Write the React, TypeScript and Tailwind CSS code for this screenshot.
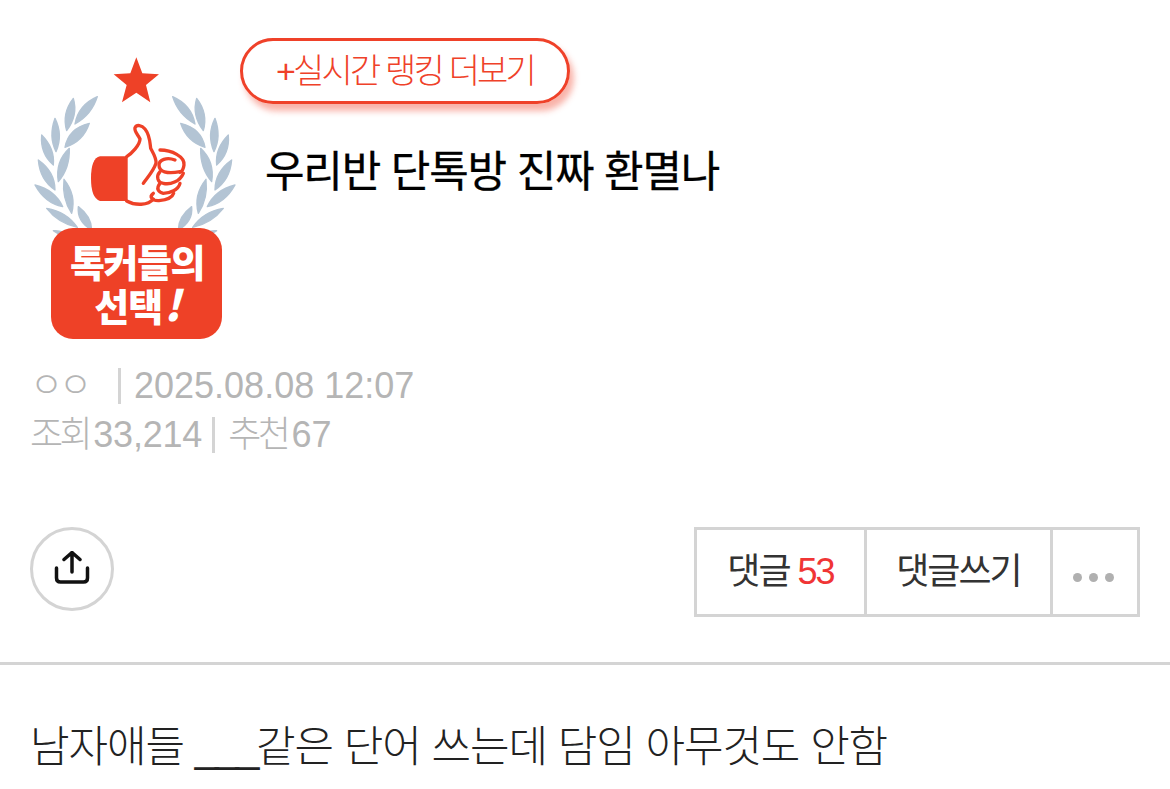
const sans = "font-['Liberation_Sans','Noto_Sans_CJK_KR',sans-serif]";

// left half of the wreath, in 3x crop coordinates
const leaves = [
  "M232 170 Q175 195 165 252 Q215 225 232 170Z",
  "M160 175 Q125 220 140 272 Q175 225 160 175Z",
  "M208 250 Q145 265 135 322 Q190 305 208 250Z",
  "M105 235 Q85 290 108 335 Q130 285 105 235Z",
  "M148 325 Q105 365 115 425 Q150 385 148 325Z",
  "M65 285 Q60 340 100 375 Q105 325 65 285Z",
  "M55 360 Q60 420 105 450 Q105 395 55 360Z",
  "M132 418 Q125 475 155 520 Q170 465 132 418Z",
  "M45 435 Q75 490 128 500 Q105 450 45 435Z",
  "M80 505 Q115 550 172 562 Q140 515 80 505Z",
  "M175 500 Q170 545 215 570 Q215 530 175 500Z",
  "M100 572 Q125 590 150 590 Q130 570 100 572Z",
];

function Badge() {
  return (
    <svg viewBox="30 50 210 295" className="w-[210px] h-[295px] shrink-0 mt-[12px]">
      <g transform="translate(20 40) scale(0.3333)">
        <g fill="#b3c4d4" stroke="#b3c4d4" strokeWidth="4" strokeLinejoin="round">
          {leaves.map((d) => <path key={d} d={d} />)}
        </g>
        <g fill="#b3c4d4" stroke="#b3c4d4" strokeWidth="4" strokeLinejoin="round" transform="translate(690 0) scale(-1 1)">
          {leaves.map((d) => <path key={d} d={d} />)}
        </g>
        <path fill="#ee4127" d="M349 52 L367 100 L417 103 L378 135 L391 187 L349 158 L306 187 L320 135 L281 103 L331 100Z" />
      </g>
      <g transform="translate(85 115) scale(0.3333)" fill="none" stroke="#ee4127" strokeWidth="10" strokeLinecap="round">
        <path fill="#ee4127" stroke="none" d="M128 124 L45 124 Q18 130 18 190 Q18 250 45 258 L128 258Z" />
        <path d="M125 125 C140 115 165 90 165 72 C160 60 147 50 150 38 C155 28 170 30 180 42 C195 60 195 85 197 100 C205 115 215 130 213 145 C205 170 185 190 175 205" />
        <path d="M225 105 C260 105 300 125 297 150 C295 165 290 170 285 172" />
        <path d="M270 135 C245 125 222 135 222 150 C222 170 245 178 285 170" />
        <path d="M225 170 C212 185 218 203 235 205 C255 210 285 200 295 175" />
        <path d="M225 205 C212 220 220 232 235 235 C255 235 280 225 285 205" />
        <path d="M205 235 C192 245 200 258 222 257 C245 255 262 248 266 235" />
        <path d="M125 258 C150 272 190 272 205 252" />
      </g>
      <rect x="51" y="228" width="171" height="111" rx="22" fill="#ee4127" />
      <text x="137" y="277" textAnchor="middle" fill="#fff" fontSize="38" fontWeight="900" letterSpacing="-1.5" fontFamily="'Noto Sans CJK KR',sans-serif">톡커들의</text>
      <text x="137" y="321" textAnchor="middle" fill="#fff" fontSize="38" fontWeight="900" letterSpacing="-1" fontFamily="'Noto Sans CJK KR',sans-serif">선택<tspan fontStyle="italic" fontSize="42" dx="2">!</tspan></text>
    </svg>
  );
}

export default function App() {
  return (
    <div className={`${sans} w-[1170px] h-[789px] overflow-hidden bg-white`}>
      <section className="flex pl-[30px] pt-[38px]">
        <Badge />
        <div className="flex flex-col items-start">
          <a className="w-[330px] h-[66px] flex items-center justify-center rounded-full border-[3px] border-[#ef4129] text-[#ef4129] text-[34px] tracking-[-2.8px] font-light shadow-[4px_7px_6px_rgba(239,65,41,0.4)]">
            +실시간 랭킹 더보기
          </a>
          <h1 className="ml-[25px] mt-[40px] text-[43px] leading-[56px] font-normal text-black tracking-[-1.2px] [-webkit-text-stroke:0.3px_#000]">
            우리반 단톡방 진짜 환멸나
          </h1>
        </div>
      </section>

      <div className="pl-[30px] mt-[17px] text-[#b5b5b5] text-[36px] leading-[48px]">
        <div className="flex items-center">
          <span className="w-[88px] tracking-[-4px] font-light">ㅇㅇ</span>
          <span className="w-[3px] h-[36px] bg-[#d4d4d4] mr-[13px]" />
          <span>2025.08.08 12:07</span>
        </div>
        <div className="flex items-center translate-y-[1px]">
          <span className="font-light tracking-[-3.5px] mr-[4px]">조회</span>
          <span className="tracking-[-0.2px]">33,214</span>
          <span className="w-[3px] h-[36px] bg-[#d4d4d4] ml-[10px] mr-[13px]" />
          <span className="font-light tracking-[-3.5px] mr-[4px]">추천</span>
          <span>67</span>
        </div>
      </div>

      <div className="flex items-start justify-between px-[30px] mt-[69px]">
        <button className="w-[84px] h-[84px] rounded-full border-[3px] border-[#d4d4d4] flex items-center justify-center">
          <svg viewBox="0 0 36 36" className="w-[36px] h-[36px]" fill="none" stroke="#111" strokeWidth="3.5" strokeLinecap="round" strokeLinejoin="round">
            <path d="M18 21 V1.5 M10 8.5 L18 1.5 L26 8.5" />
            <path d="M2.5 17 V27 Q2.5 31 6.5 31 H29.5 Q33.5 31 33.5 27 V17" />
          </svg>
        </button>
        <div className="flex w-[446px] h-[90px] border-[3px] border-[#d4d4d4] text-[#333] text-[36px] tracking-[-2px] font-normal">
          <button className="w-[170px] flex items-center justify-center border-r-[3px] border-[#d4d4d4]">
            댓글&nbsp;<span className="text-[#f03535]">53</span>
          </button>
          <button className="w-[186px] flex items-center justify-center border-r-[3px] border-[#d4d4d4]">
            댓글쓰기
          </button>
          <button className="flex-1 flex items-center justify-center gap-[7px] pt-[10px] pr-[4px]">
            <span className="w-[9px] h-[9px] rounded-full bg-[#b0b0b0]" />
            <span className="w-[9px] h-[9px] rounded-full bg-[#b0b0b0]" />
            <span className="w-[9px] h-[9px] rounded-full bg-[#b0b0b0]" />
          </button>
        </div>
      </div>

      <hr className="mt-[45px] border-0 h-[3px] bg-[#d4d4d4]" />

      <p className="pl-[30px] mt-[52px] text-[43px] leading-[60px] font-light text-[#222] tracking-[-1.1px] whitespace-pre">
        남자애들 <span className="tracking-[-3.5px]">___</span>같은 단어 쓰는데 담임 아무것도 안함
      </p>
    </div>
  );
}
